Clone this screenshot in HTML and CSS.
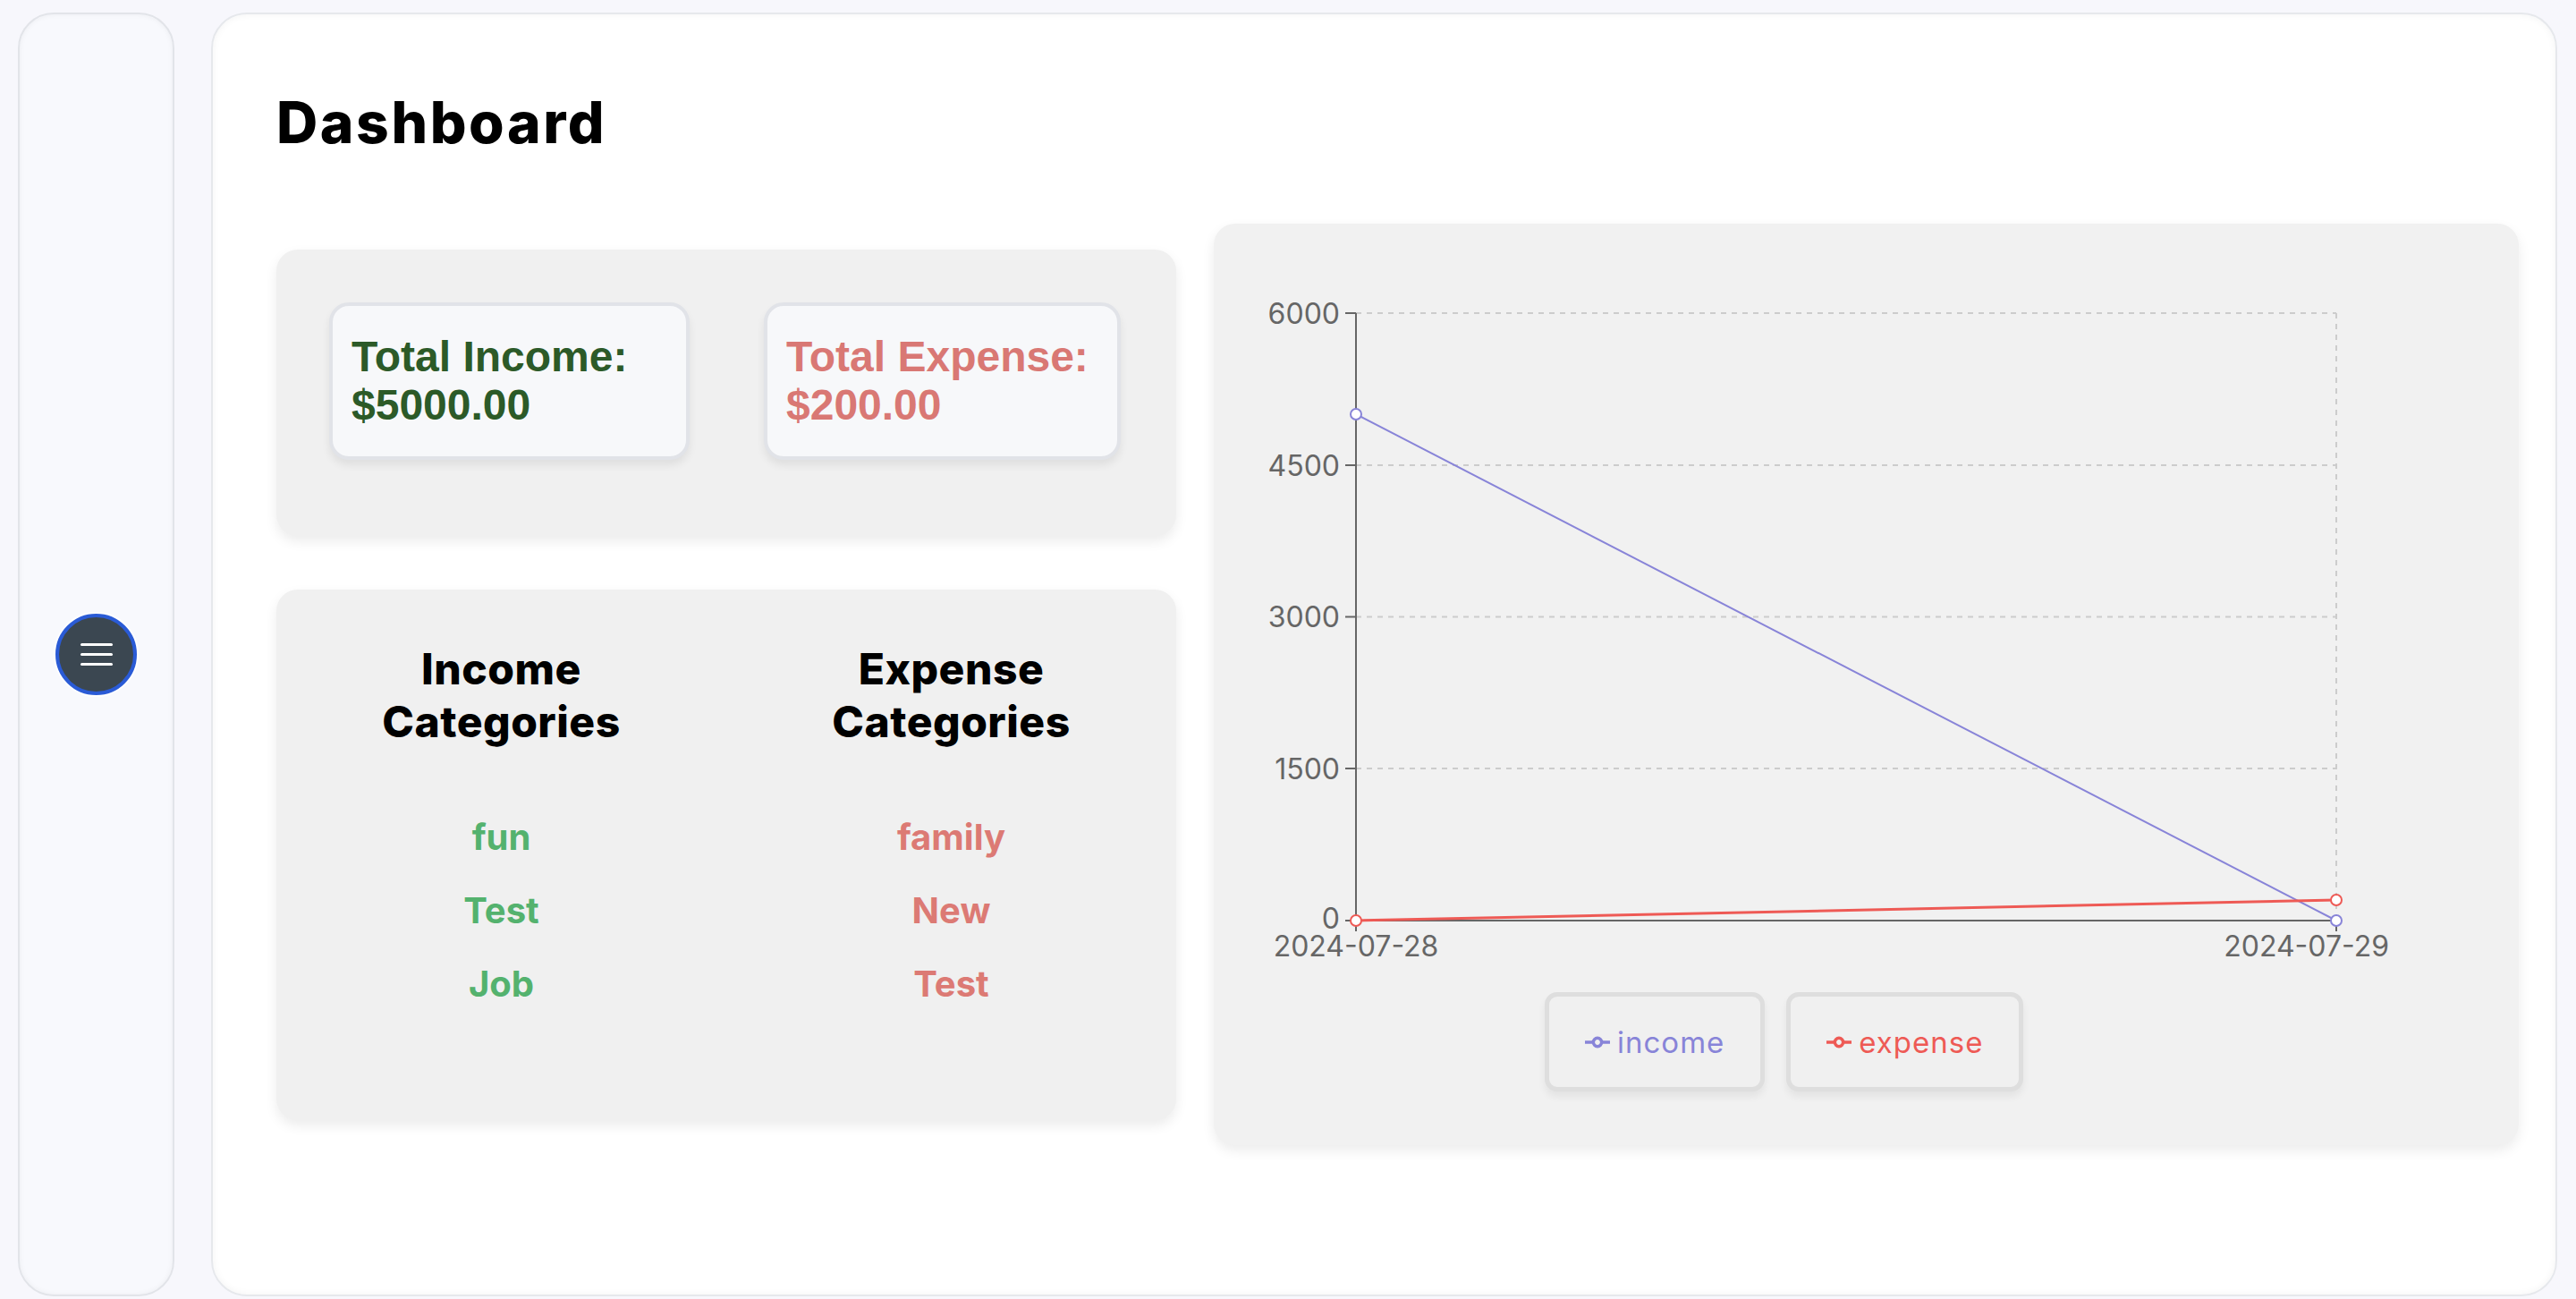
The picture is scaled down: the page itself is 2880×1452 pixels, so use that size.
FILE: index.html
```html
<!DOCTYPE html>
<html lang="en">
<head>
<meta charset="utf-8">
<title>Dashboard</title>
<link rel="stylesheet" href="styles.css">
</head>
<body>
<div class="app">
  <aside class="sidebar">
    <button class="menu-btn" aria-label="Menu"><span></span><span></span><span></span></button>
  </aside>
  <main class="main">
    <h1 class="title">Dashboard</h1>
    <div class="content">
      <div class="left-col">
        <section class="card totals">
          <div class="stat stat-income"><p>Total Income:</p><p>$5000.00</p></div>
          <div class="stat stat-expense"><p>Total Expense:</p><p>$200.00</p></div>
        </section>
        <section class="card cats">
          <div class="cat-col cat-income">
            <h2>Income<br>Categories</h2>
            <ul><li>fun</li><li>Test</li><li>Job</li></ul>
          </div>
          <div class="cat-col cat-expense">
            <h2>Expense<br>Categories</h2>
            <ul><li>family</li><li>New</li><li>Test</li></ul>
          </div>
        </section>
      </div>
      <section class="card chart-card">
        <svg class="chart" width="1459" height="859" viewBox="0 0 1459 859">
          <g class="grid">
            <line x1="159" y1="100" x2="1255" y2="100"/>
            <line x1="159" y1="270" x2="1255" y2="270"/>
            <line x1="159" y1="439.5" x2="1255" y2="439.5"/>
            <line x1="159" y1="609" x2="1255" y2="609"/>
            <line x1="1255" y1="100" x2="1255" y2="779"/>
          </g>
          <g class="axis">
            <line x1="159" y1="100" x2="159" y2="779"/>
            <line x1="159" y1="779" x2="1255" y2="779"/>
            <line x1="147" y1="100" x2="159" y2="100"/>
            <line x1="147" y1="270" x2="159" y2="270"/>
            <line x1="147" y1="439.5" x2="159" y2="439.5"/>
            <line x1="147" y1="609" x2="159" y2="609"/>
            <line x1="147" y1="779" x2="159" y2="779"/>
            <line x1="159" y1="779" x2="159" y2="791"/>
            <line x1="1255" y1="779" x2="1255" y2="791"/>
          </g>
          <g class="ticks">
            <text x="141" y="100" text-anchor="end" dy="0.36em">6000</text>
            <text x="141" y="270" text-anchor="end" dy="0.36em">4500</text>
            <text x="141" y="439.5" text-anchor="end" dy="0.36em">3000</text>
            <text x="141" y="609" text-anchor="end" dy="0.36em">1500</text>
            <text x="141" y="776" text-anchor="end" dy="0.36em">0</text>
            <text x="159" y="819" text-anchor="middle">2024-07-28</text>
            <text x="1314" y="819" text-anchor="end">2024-07-29</text>
          </g>
          <polyline class="line-income" points="159,213 1255,779"/>
          <polyline class="line-expense" points="159,779 1255,756"/>
          <circle class="dot-income" cx="159" cy="213" r="6"/>
          <circle class="dot-income" cx="1255" cy="779" r="6"/>
          <circle class="dot-expense" cx="159" cy="779" r="6"/>
          <circle class="dot-expense" cx="1255" cy="756" r="6"/>
        </svg>
        <div class="legend">
          <div class="legend-item legend-income">
            <svg class="legend-icon" width="28" height="28" viewBox="0 0 32 32"><path d="M0,16h10.67A5.33,5.33,0,1,1,21.33,16H32M21.33,16A5.33,5.33,0,1,1,10.67,16"/></svg>
            <span>income</span>
          </div>
          <div class="legend-item legend-expense">
            <svg class="legend-icon" width="28" height="28" viewBox="0 0 32 32"><path d="M0,16h10.67A5.33,5.33,0,1,1,21.33,16H32M21.33,16A5.33,5.33,0,1,1,10.67,16"/></svg>
            <span>expense</span>
          </div>
        </div>
      </section>
    </div>
  </main>
</div>
</body>
</html>
```

FILE: styles.css
```css
html, body {
  margin: 0;
  height: 100%;
}

body {
  background: #f7f7fc;
  font-family: Inter, "Noto Sans", sans-serif;
  color: #000;
}

.app {
  display: flex;
  gap: 41px;
  height: 1452px;
  padding: 14px 21px 3px 20px;
  box-sizing: border-box;
}

.sidebar {
  width: 175px;
  flex: none;
  box-sizing: border-box;
  border: 2px solid #e2e4e9;
  border-radius: 40px;
  background: #f8f9fd;
  box-shadow: inset 0 0 6px rgba(0, 0, 0, 0.05);
  display: flex;
  align-items: center;
  justify-content: center;
}

.menu-btn {
  width: 91px;
  height: 91px;
  box-sizing: border-box;
  border-radius: 50%;
  background: #3b4751;
  border: 4px solid #2a5bd6;
  box-shadow: 0 0 0 2px #ffffff;
  display: flex;
  flex-direction: column;
  align-items: center;
  justify-content: center;
  gap: 8px;
  padding: 0;
  cursor: pointer;
}

.menu-btn span {
  display: block;
  width: 36px;
  height: 3px;
  border-radius: 2px;
  background: #ffffff;
}

.main {
  flex: 1;
  box-sizing: border-box;
  border: 2px solid #e6e8ec;
  border-radius: 40px;
  background: #ffffff;
  box-shadow: inset 0 0 8px rgba(0, 0, 0, 0.05);
  padding: 89px 41px 0 71px;
}

.title {
  margin: 0 0 81px;
  font-size: 64px;
  line-height: 64px;
  font-weight: 800;
  letter-spacing: 2.6px;
}

.content {
  display: flex;
  align-items: center;
  gap: 42px;
}

.left-col {
  width: 1006px;
  flex: none;
  display: flex;
  flex-direction: column;
  gap: 60px;
}

.card {
  background: #f0f0f0;
  border-radius: 24px;
  box-shadow: 0 6px 14px rgba(0, 0, 0, 0.08);
}

.totals {
  display: grid;
  grid-template-columns: 403px 399px;
  column-gap: 83px;
  padding: 59px 62px 85px 59px;
}

.stat {
  box-sizing: border-box;
  border: 4px solid #e1e3e8;
  border-radius: 22px;
  background: #f7f8fa;
  padding: 30px 21px;
  font-family: "Liberation Sans", Arial, sans-serif;
  font-weight: 700;
  font-size: 48px;
  line-height: 54px;
  box-shadow: 0 6px 10px rgba(0, 0, 0, 0.07);
}

.stat p {
  margin: 0;
}

.stat-income {
  color: #2c5a28;
}

.stat-expense {
  color: #d97874;
}

.cats {
  display: grid;
  grid-template-columns: 1fr 1fr;
  padding: 59px 0 124px;
  text-align: center;
}

.cat-col h2 {
  margin: 0 0 72px;
  font-size: 48px;
  line-height: 59px;
  font-weight: 800;
  letter-spacing: 0.5px;
}

.cat-col ul {
  list-style: none;
  margin: 0;
  padding: 0;
}

.cat-col li {
  font-size: 40px;
  line-height: 56px;
  font-weight: 700;
}

.cat-col li + li {
  margin-top: 26px;
}

.cat-income li {
  color: #54b26e;
}

.cat-expense li {
  color: #dc7a74;
}

.chart-card {
  flex: 1;
  height: 1030px;
  box-sizing: border-box;
  display: flex;
  flex-direction: column;
  background: #f1f1f1;
}

.chart {
  display: block;
}

.grid line {
  stroke: #cccccc;
  stroke-width: 2;
  stroke-dasharray: 6 6;
}

.axis line {
  stroke: #666666;
  stroke-width: 2;
}

.ticks text {
  fill: #666666;
  font-size: 32px;
  font-family: Inter, "Noto Sans", sans-serif;
}

.line-income {
  fill: none;
  stroke: #8884d8;
  stroke-width: 2;
}

.line-expense {
  fill: none;
  stroke: #ee5a55;
  stroke-width: 3;
}

.dot-income {
  fill: #ffffff;
  stroke: #8884d8;
  stroke-width: 2;
}

.dot-expense {
  fill: #ffffff;
  stroke: #ee5a55;
  stroke-width: 2;
}

.legend {
  display: flex;
  gap: 24px;
  padding-left: 370px;
}

.legend-item {
  height: 111px;
  box-sizing: border-box;
  border: 5px solid #dedede;
  border-radius: 14px;
  background: #f0f0f0;
  display: flex;
  align-items: center;
  gap: 8px;
  padding: 0 40px;
  font-size: 33px;
  letter-spacing: 1px;
  box-shadow: 0 6px 8px rgba(0, 0, 0, 0.06);
}

.legend-icon path {
  fill: none;
  stroke-width: 4;
}

.legend-income {
  color: #8884d8;
}

.legend-income path {
  stroke: #8884d8;
}

.legend-expense {
  color: #ee5a55;
}

.legend-expense path {
  stroke: #ee5a55;
}
```
